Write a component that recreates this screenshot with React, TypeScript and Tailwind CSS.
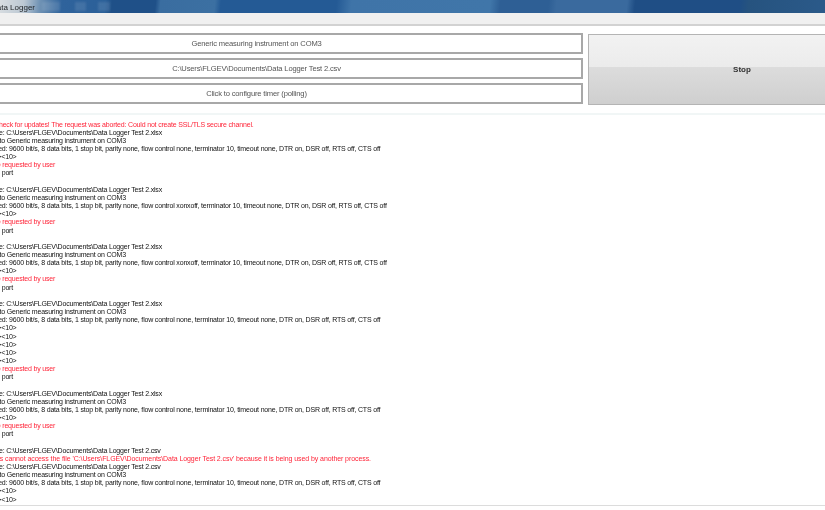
const R = "text-[#ff2438]";

type Line = { t: string; red?: boolean; wide?: boolean } | null;

const path = "C:\\Users\\FLGEV\\Documents\\Data Logger Test 2";
const portNone = "Settings used: 9600 bit/s, 8 data bits, 1 stop bit, parity none, flow control none, terminator 10, timeout none, DTR on, DSR off, RTS off, CTS off";
const portXon = "Settings used: 9600 bit/s, 8 data bits, 1 stop bit, parity none, flow control xonxoff, terminator 10, timeout none, DTR on, DSR off, RTS off, CTS off";
const out = (ext: string): Line => ({ t: `Output to file: ${path}.${ext}` });
const conn: Line = { t: "Connected to Generic measuring instrument on COM3" };
const rx: Line = { t: "Reply: <13><10>" };
const stop: Line = { t: "Logger stop requested by user", red: true };
const closed: Line = { t: "Close serial port" };

const lines: Line[] = [
  { t: "Could not check for updates! The request was aborted: Could not create SSL/TLS secure channel.", red: true },
  out("xlsx"), conn, { t: portNone }, rx, stop, closed, null,
  out("xlsx"), conn, { t: portXon }, rx, stop, closed, null,
  out("xlsx"), conn, { t: portXon }, rx, stop, closed, null,
  out("xlsx"), conn, { t: portNone }, rx, rx, rx, rx, rx, stop, closed, null,
  out("xlsx"), conn, { t: portNone }, rx, stop, closed, null,
  out("csv"),
  { t: `The process cannot access the file '${path}.csv' because it is being used by another process.`, red: true, wide: true },
  out("csv"), conn, { t: portNone }, rx, rx,
];

export default function App() {
  return (
    <div className="w-[825px] h-[510px] overflow-hidden bg-white flex flex-col blur-[0.4px] font-['Liberation_Sans',sans-serif]">
      <div className="relative h-[13px] shrink-0 overflow-hidden bg-[linear-gradient(96deg,#d8dde1_0px,#bcc8d3_24px,#6f92b4_40px,#2f639c_62px,#2b6099_105px,#1f5088_112px,#1f5088_155px,#3a6da0_160px,#3c70a2_214px,#245a95_220px,#245a95_335px,#3f74a8_350px,#4076a9_488px,#2e5f95_498px,#2e5f95_546px,#3a6a9e_554px,#3a6a9e_624px,#1f4e85_632px,#1f4e85_736px,#26537f_745px,#2b5a8a_825px)]">
        <span className="absolute left-[42px] top-[2px] w-[18px] h-[9px] bg-white/10 blur-[1px]" />
        <span className="absolute left-[75px] top-[2px] w-[11px] h-[9px] bg-white/10 blur-[1px]" />
        <span className="absolute left-[98px] top-[2px] w-[12px] h-[9px] bg-white/10 blur-[1px]" />
        <span className="absolute left-[-9px] top-[2px] text-[8px] leading-[11px] text-[#1c2024]">Data Logger</span>
      </div>
      <div className="h-[13px] shrink-0 bg-[#f0f0f0] border-b-2 border-[#d2d2d2]" />
      <div className="flex gap-[5px] pt-[7px] h-[87px] shrink-0 ml-[-70px]">
        <div className="w-[653px] shrink-0 flex flex-col gap-[4px] pb-[8px]">
          {["Generic measuring instrument on COM3", `${path}.csv`, "Click to configure timer (polling)"].map((s) => (
            <div
              key={s}
              className="h-[21px] border-2 border-[#a8a8a8] bg-white flex items-center justify-center text-[7.6px] tracking-[-0.17px] text-[#555555]"
            >
              {s}
            </div>
          ))}
        </div>
        <div className="w-[308px] h-[71px] shrink-0 mt-[1px] border border-[#b4b4b4] bg-[linear-gradient(180deg,#f2f2f2_0%,#ebebeb_47%,#dcdcdc_47%,#cfcfcf_100%)] flex items-center justify-center text-[8px] font-bold text-[#333333]">
          Stop
        </div>
      </div>
      <div className="flex-1 min-h-0 mb-[4px] bg-white overflow-hidden border-t-2 border-t-[#f1f6f6] border-b border-b-[#dcdcdc] pt-[5.5px] text-[7px] tracking-[-0.18px] leading-[8.15px] text-[#111111] whitespace-nowrap">
        <div className="ml-[-34.5px]">
          {lines.map((l, i) =>
            l ? (
              <div key={i} className={(l.red ? R : "") + (l.wide ? " tracking-[-0.08px]" : "")}>
                {l.t}
              </div>
            ) : (
              <div key={i} className="h-[8.15px]" />
            )
          )}
        </div>
      </div>
    </div>
  );
}
